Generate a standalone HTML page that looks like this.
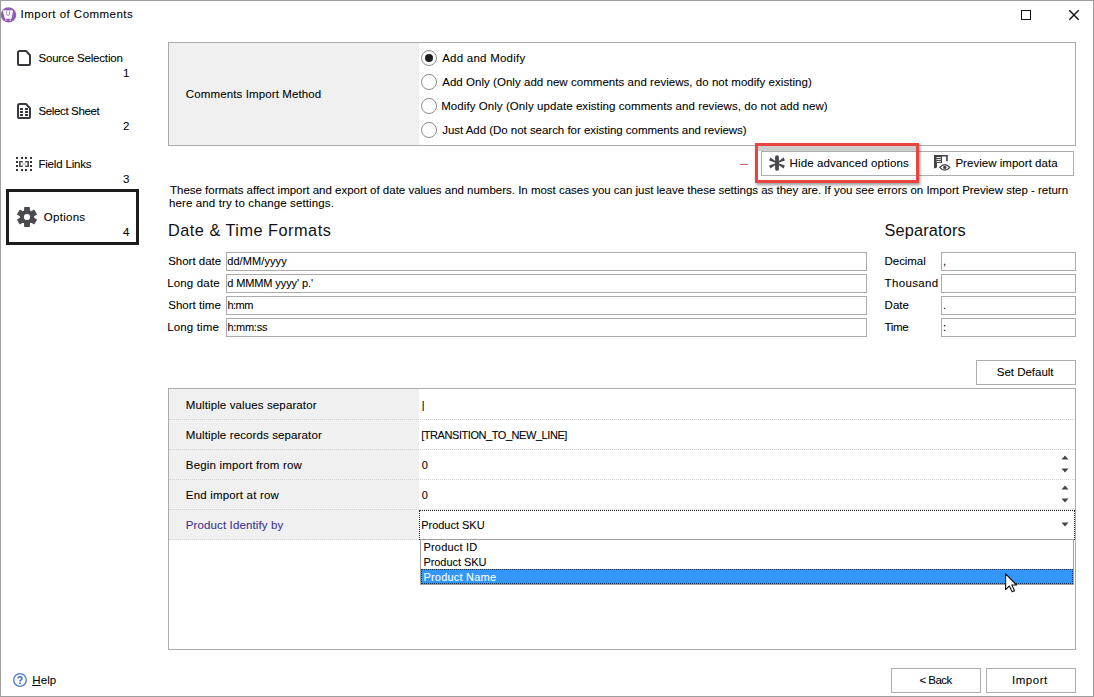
<!DOCTYPE html>
<html lang="en">
<head>
<meta charset="utf-8">
<title>Import of Comments</title>
<style>
html,body{margin:0;padding:0;}
body{width:1094px;height:697px;overflow:hidden;background:#fff;position:relative;
  font-family:"Liberation Sans",sans-serif;font-size:11.5px;color:#000;-webkit-text-stroke-width:0.08px;}
#win{position:absolute;left:0;top:0;width:1092px;height:695px;border:1px solid #9e9e9e;background:#fff;}
.t{position:absolute;white-space:nowrap;line-height:14px;height:14px;}
.box{position:absolute;box-sizing:border-box;}
.inp{position:absolute;box-sizing:border-box;border:1px solid #ababab;background:#fff;height:19px;}
.btn{position:absolute;box-sizing:border-box;border:1px solid #adadad;background:#fff;}
.radio{position:absolute;box-sizing:border-box;width:16px;height:16px;border:1px solid #8c8c8c;border-radius:50%;background:#fff;}
.row{position:absolute;left:169px;width:906px;height:0;border-top:1px dotted #d2d2d2;}
svg{position:absolute;overflow:visible;}
</style>
</head>
<body>
<div id="win"></div>

<!-- title bar -->
<svg style="left:1px;top:6px" width="17" height="18" viewBox="0 0 17 18">
  <circle cx="7.5" cy="8.9" r="7.7" fill="#8f5db2"/>
  <path d="M2.2 4.8 H11.6 L10.2 12.3 H4.2 Z" fill="#fff" stroke="#fff" stroke-width="0.8" stroke-linejoin="round"/>
  <path d="M5.7 4.6 V8 Q5.7 9.6 7.1 9.6 Q8.5 9.6 8.5 8 V4.6" fill="none" stroke="#a98cc6" stroke-width="0.9"/>
  <circle cx="4.9" cy="14" r="0.85" fill="#e3d4ee"/><circle cx="9.3" cy="14" r="0.85" fill="#e3d4ee"/>
</svg>
<span class="t" id="title" style="left:20.6px;top:7px;letter-spacing:0.47px;">Import of Comments</span>
<div class="box" style="left:1021px;top:10px;width:10px;height:10px;border:1px solid #111;"></div>
<svg style="left:1069px;top:10px" width="10" height="10" viewBox="0 0 10 10"><path d="M0.3 0.3 L9.7 9.7 M9.7 0.3 L0.3 9.7" stroke="#111" stroke-width="1.4" fill="none"/></svg>

<!-- sidebar -->
<svg style="left:17px;top:50px" width="14" height="16" viewBox="0 0 14 16"><path d="M1 2.6 Q1 1 2.6 1 H9 L13 5.2 V13.4 Q13 15 11.4 15 H2.6 Q1 15 1 13.4 Z" fill="none" stroke="#3a383e" stroke-width="2" stroke-linejoin="round"/></svg>
<span class="t" id="s1" style="left:38.4px;top:51px;letter-spacing:-0.16px;">Source Selection</span>
<span class="t" id="n1" style="left:123px;top:66px;">1</span>

<svg style="left:17px;top:103px" width="14" height="16" viewBox="0 0 14 16"><path d="M1 2.6 Q1 1 2.6 1 H9 L13 5.2 V13.4 Q13 15 11.4 15 H2.6 Q1 15 1 13.4 Z" fill="none" stroke="#3a383e" stroke-width="2" stroke-linejoin="round"/>
<path d="M3 5h3v2H3z M8 5h3v2H8z M3 8h3v2H3z M8 8h3v2H8z M3 11h3v2H3z M8 11h3v2H8z" fill="#3a383e"/></svg>
<span class="t" id="s2" style="left:38.4px;top:104px;letter-spacing:-0.35px;">Select Sheet</span>
<span class="t" id="n2" style="left:123px;top:119px;">2</span>

<svg style="left:16px;top:157px" width="16" height="14" viewBox="0 0 16 14">
<path d="M0 0h2v2H0z M5 0h2v2H5z M9 0h2v2H9z M14 0h2v2H14z M0 4h2v2H0z M14 4h2v2H14z M0 8h2v2H0z M14 8h2v2H14z M0 12h2v2H0z M5 12h2v2H5z M9 12h2v2H9z M14 12h2v2H14z" fill="#333"/>
<path d="M6.8 4.7H3.8V9.3H6.8 M9.2 4.7H12.2V9.3H9.2" fill="none" stroke="#444" stroke-width="1.5"/><path d="M6.5 7H9.5" stroke="#999" stroke-width="1"/></svg>
<span class="t" id="s3" style="left:38.4px;top:157px;letter-spacing:-0.18px;">Field Links</span>
<span class="t" id="n3" style="left:123px;top:172px;">3</span>

<div class="box" style="left:6px;top:189px;width:133px;height:56px;border:3px solid #1c1c1c;"></div>
<svg style="left:17px;top:207px" width="20" height="20" viewBox="-10 -10 20 20"><g fill="#4a4950"><circle r="7.2"/><rect x="-2.9" y="-10" width="5.8" height="20" rx="0.5"/><rect x="-2.9" y="-10" width="5.8" height="20" rx="0.5" transform="rotate(60)"/><rect x="-2.9" y="-10" width="5.8" height="20" rx="0.5" transform="rotate(120)"/></g><circle r="3.1" fill="#fff"/></svg>
<span class="t" id="s4" style="left:43.8px;top:210px;letter-spacing:0.27px;">Options</span>
<span class="t" id="n4" style="left:123px;top:225px;">4</span>

<!-- top panel -->
<div class="box" style="left:168px;top:42px;width:908px;height:104px;border:1px solid #ababab;background:#fff;"></div>
<div class="box" style="left:169px;top:43px;width:250px;height:102px;background:#f0f0f0;"></div>
<span class="t" id="cim" style="left:185.8px;top:87px;letter-spacing:0.12px;">Comments Import Method</span>

<div class="radio" style="left:421px;top:50px;"></div><div class="box" style="left:425px;top:54px;width:8px;height:8px;border-radius:50%;background:#1e1e1e;"></div>
<div class="radio" style="left:421px;top:74px;"></div>
<div class="radio" style="left:421px;top:98px;"></div>
<div class="radio" style="left:421px;top:122px;"></div>
<span class="t" id="r1" style="left:442.2px;top:51px;letter-spacing:0.24px;">Add and Modify</span>
<span class="t" id="r2" style="left:442.2px;top:75px;letter-spacing:0.04px;">Add Only (Only add new comments and reviews, do not modify existing)</span>
<span class="t" id="r3" style="left:441.2px;top:99px;letter-spacing:0.07px;">Modify Only (Only update existing comments and reviews, do not add new)</span>
<span class="t" id="r4" style="left:442.2px;top:123px;letter-spacing:-0.03px;">Just Add (Do not search for existing comments and reviews)</span>

<!-- buttons row -->
<div class="box" style="left:740px;top:164px;width:8px;height:1px;background:#cf6a66;"></div>
<div class="box" style="left:758px;top:146px;width:158px;height:5px;background:#cdcdcd;"></div>
<div class="btn" style="left:761px;top:151px;width:156px;height:25px;"></div>
<div class="btn" style="left:917px;top:151px;width:157px;height:25px;"></div>
<svg style="left:769px;top:155px" width="16" height="16" viewBox="0 0 16 16"><g fill="#49484e"><rect x="6.1" y="0.2" width="3.8" height="15.6" rx="1.9"/><path d="M8 7.2 L14.6 2.6 L15.9 5.6 L8.6 8 L15.9 10.4 L14.6 13.4 L8 8.8 L1.4 13.4 L0.1 10.4 L7.4 8 L0.1 5.6 L1.4 2.6 Z"/></g></svg>
<span class="t" id="hao" style="left:789.6px;top:156px;letter-spacing:0.11px;">Hide advanced options</span>
<svg style="left:934px;top:155px" width="16" height="16" viewBox="0 0 16 16">
<path d="M0 0 H13.8 V6.2 H12.2 V1.6 H8 V8 H3 V12.6 L0 13.4 Z" fill="#424146"/>
<path d="M2.4 2.6 H7 M2.4 4.6 H7 M2.4 6.6 H7" stroke="#fff" stroke-width="0.9" fill="none"/>
<path d="M5.8 12.4 Q10.8 6.8 15.8 12.4 Q10.8 18 5.8 12.4 Z" fill="#fff" stroke="#424146" stroke-width="1.3"/><circle cx="10.8" cy="12.4" r="1.7" fill="#424146"/></svg>
<span class="t" id="pid" style="left:955.4px;top:156px;letter-spacing:0.03px;">Preview import data</span>
<div class="box" style="left:755px;top:143px;width:164px;height:40px;border:3px solid #ea4441;box-shadow:1px 2px 3px rgba(0,0,0,.4);"></div>

<!-- description -->
<span class="t" id="d1" style="left:170.0px;top:183px;letter-spacing:-0.01px;">These formats affect import and export of date values and numbers. In most cases you can just leave these settings as they are. If you see errors on Import Preview step - return</span>
<span class="t" id="d2" style="left:169.0px;top:196px;letter-spacing:0.12px;">here and try to change settings.</span>

<!-- date & time -->
<span class="t" id="h1" style="left:168.0px;top:219.5px;font-size:16.3px;line-height:20px;height:20px;color:#111;-webkit-text-stroke-width:0;letter-spacing:0.50px;">Date &amp; Time Formats</span>
<span class="t" id="l1" style="left:168.2px;top:254px;letter-spacing:-0.01px;">Short date</span>
<span class="t" id="l2" style="left:167.2px;top:276px;letter-spacing:0.16px;">Long date</span>
<span class="t" id="l3" style="left:168.2px;top:298px;letter-spacing:0.03px;">Short time</span>
<span class="t" id="l4" style="left:167.2px;top:320px;letter-spacing:0.14px;">Long time</span>
<div class="inp" style="left:226px;top:252px;width:641px;"></div>
<div class="inp" style="left:226px;top:274px;width:641px;"></div>
<div class="inp" style="left:226px;top:296px;width:641px;"></div>
<div class="inp" style="left:226px;top:318px;width:641px;"></div>
<span class="t" id="v1" style="left:227.2px;top:254px;font-size:11px;letter-spacing:0.09px;">dd/MM/yyyy</span>
<span class="t" id="v2" style="left:227.2px;top:276px;font-size:11px;letter-spacing:-0.10px;">d MMMM yyyy' p.'</span>
<span class="t" id="v3" style="left:227.4px;top:298px;font-size:11px;letter-spacing:-0.53px;">h:mm</span>
<span class="t" id="v4" style="left:227.4px;top:320px;font-size:11px;letter-spacing:-0.26px;">h:mm:ss</span>

<!-- separators -->
<span class="t" id="h2" style="left:884.6px;top:219.5px;font-size:16.3px;line-height:20px;height:20px;color:#111;-webkit-text-stroke-width:0;letter-spacing:0.16px;">Separators</span>
<span class="t" id="p1" style="left:884.6px;top:254px;letter-spacing:-0.07px;">Decimal</span>
<span class="t" id="p2" style="left:884.6px;top:276px;letter-spacing:0.33px;">Thousand</span>
<span class="t" id="p3" style="left:884.6px;top:298px;letter-spacing:-0.01px;">Date</span>
<span class="t" id="p4" style="left:884.6px;top:320px;letter-spacing:-0.33px;">Time</span>
<div class="inp" style="left:941px;top:252px;width:135px;"></div>
<div class="inp" style="left:941px;top:274px;width:135px;"></div>
<div class="inp" style="left:941px;top:296px;width:135px;"></div>
<div class="inp" style="left:941px;top:318px;width:135px;"></div>
<span class="t" id="q1" style="left:943px;top:254px;font-size:11px;">,</span>
<span class="t" id="q3" style="left:943px;top:298px;font-size:11px;">.</span>
<span class="t" id="q4" style="left:943px;top:320px;font-size:11px;">:</span>

<div class="btn" style="left:976px;top:360px;width:100px;height:25px;"></div>
<span class="t" id="sd" style="left:996.8px;top:365px;letter-spacing:-0.02px;">Set Default</span>

<!-- grid -->
<div class="box" style="left:168px;top:388px;width:908px;height:262px;border:1px solid #ababab;background:#fff;"></div>
<div class="box" style="left:169px;top:389px;width:250px;height:151px;background:#f0f0f0;"></div>
<div class="row" style="top:419px;"></div>
<div class="row" style="top:449px;"></div>
<div class="row" style="top:479px;"></div>
<div class="row" style="top:509px;"></div>
<div class="row" style="top:539px;"></div>
<span class="t" id="g1" style="left:185.8px;top:398px;letter-spacing:0.12px;">Multiple values separator</span>
<span class="t" id="g2" style="left:185.8px;top:428px;letter-spacing:0.12px;">Multiple records separator</span>
<span class="t" id="g3" style="left:185.8px;top:458px;letter-spacing:0.18px;">Begin import from row</span>
<span class="t" id="g4" style="left:185.8px;top:488px;letter-spacing:0.18px;">End import at row</span>
<span class="t" id="g5" style="left:185.8px;top:518px;color:#3a2f8f;letter-spacing:0.12px;">Product Identify by</span>
<span class="t" id="w1" style="left:421.8px;top:398px;font-size:11px;">|</span>
<span class="t" id="w2" style="left:421.2px;top:428px;font-size:11px;letter-spacing:-0.44px;">[TRANSITION_TO_NEW_LINE]</span>
<span class="t" id="w3" style="left:421.8px;top:458px;font-size:11px;">0</span>
<span class="t" id="w4" style="left:421.8px;top:488px;font-size:11px;">0</span>
<div class="box" style="left:419px;top:510px;width:656px;height:30px;border:1px dotted #222;background:#fff;"></div>
<span class="t" id="w5" style="left:421.2px;top:518px;font-size:11px;letter-spacing:-0.02px;">Product SKU</span>
<svg style="left:1061px;top:454px" width="8" height="20" viewBox="0 0 8 20"><path d="M0.5 5.5 L4 1.5 L7.5 5.5Z M0.5 14.5 L4 18.5 L7.5 14.5Z" fill="#444"/></svg>
<svg style="left:1061px;top:484px" width="8" height="20" viewBox="0 0 8 20"><path d="M0.5 5.5 L4 1.5 L7.5 5.5Z M0.5 14.5 L4 18.5 L7.5 14.5Z" fill="#444"/></svg>
<svg style="left:1061px;top:522px" width="8" height="5" viewBox="0 0 8 5"><path d="M0.5 0.5 L4 4.5 L7.5 0.5Z" fill="#444"/></svg>

<!-- popup -->
<div class="box" style="left:420px;top:539px;width:654px;height:46px;border:1px solid #a0a0a0;background:#fff;"></div>
<div class="box" style="left:421px;top:569px;width:652px;height:15px;background:#3396fa;border:1px dotted #10335e;"></div>
<span class="t" id="o1" style="left:423.4px;top:540px;font-size:11px;letter-spacing:0.21px;">Product ID</span>
<span class="t" id="o2" style="left:423.4px;top:555px;font-size:11px;letter-spacing:-0.06px;">Product SKU</span>
<span class="t" id="o3" style="left:423.4px;top:570px;color:#fff;font-size:11px;letter-spacing:0.21px;">Product Name</span>
<svg style="left:1005px;top:573px" width="13" height="20" viewBox="0 0 13 20"><path d="M0.6 0.9 V16.6 L4.3 13 L7.2 18.8 L9.6 17.7 L6.8 12 H11.6 Z" fill="#fff" stroke="#111" stroke-width="1.1" stroke-linejoin="round"/></svg>

<!-- bottom -->
<svg style="left:12px;top:672px" width="16" height="16" viewBox="0 0 16 16"><circle cx="8" cy="8" r="6.3" fill="#fff" stroke="#4a7ccc" stroke-width="1.3"/><path d="M6 6.6Q6 4.8 8 4.8Q9.9 4.8 9.9 6.4Q9.9 7.4 8.9 8Q8 8.5 8 9.4" fill="none" stroke="#3f6fc4" stroke-width="1.5"/><circle cx="8" cy="11.2" r="0.9" fill="#3f6fc4"/></svg>
<span class="t" id="help" style="left:32.2px;top:673px;letter-spacing:0.14px;"><u>H</u>elp</span>
<div class="btn" style="left:891px;top:668px;width:90px;height:25px;"></div>
<div class="btn" style="left:986px;top:668px;width:90px;height:25px;"></div>
<span class="t" id="bk" style="left:919.4px;top:673px;letter-spacing:-0.52px;">&lt; Back</span>
<span class="t" id="im" style="left:1012.0px;top:673px;letter-spacing:0.52px;">Import</span>
</body>
</html>
